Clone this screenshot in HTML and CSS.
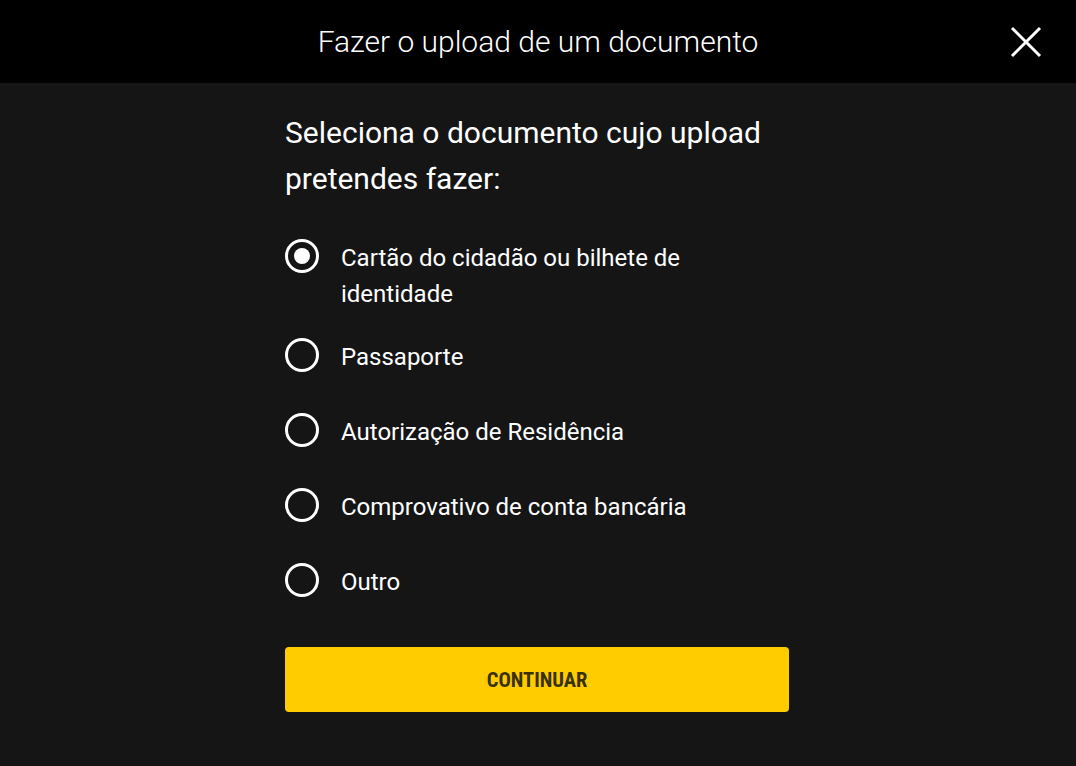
FILE: index.html
```html
<!DOCTYPE html>
<html>
<head>
    <title>Fazer o upload de um documento</title>
    <link rel="stylesheet" href="styles.css">
</head>
<body>

    <div class="topbar">
        <h1>Fazer o upload de um documento</h1>
        <button class="close" aria-label="Fechar">
            <svg width="32" height="32" viewBox="0 0 32 32">
                <path d="M2 2 L30 30 M30 2 L2 30" stroke="#fff" stroke-width="3" fill="none"/>
            </svg>
        </button>
    </div>

    <div class="content">
        <h2>Seleciona o documento cujo upload pretendes fazer:</h2>

        <div class="options">
            <label class="option option-long">
                <span class="radio checked"></span>
                <span class="label">Cartão do cidadão ou bilhete de identidade</span>
            </label>
            <label class="option">
                <span class="radio"></span>
                <span class="label">Passaporte</span>
            </label>
            <label class="option">
                <span class="radio"></span>
                <span class="label">Autorização de Residência</span>
            </label>
            <label class="option">
                <span class="radio"></span>
                <span class="label">Comprovativo de conta bancária</span>
            </label>
            <label class="option">
                <span class="radio"></span>
                <span class="label">Outro</span>
            </label>
        </div>

        <button class="continue">CONTINUAR</button>
    </div>

</body>
</html>
```

FILE: styles.css
```css
body {
    margin: 0;
    font-family: Roboto, 'Liberation Sans', sans-serif;
    background-color: #151515;
    color: #fff;
}

.topbar {
    position: relative;
    height: 83px;
    background-color: #000;
    display: flex;
    align-items: center;
    justify-content: center;
}

.topbar h1 {
    margin: 0;
    font-size: 30px;
    font-weight: 300;
    color: #fff;
}

.close {
    position: absolute;
    right: 34px;
    top: 26px;
    background: none;
    border: none;
    padding: 0;
    width: 32px;
    height: 32px;
    cursor: pointer;
}

.content {
    width: 504px;
    margin-left: calc(50% - 253px);
    padding-top: 27px;
}

.content h2 {
    margin: 0 0 38px 0;
    font-size: 30px;
    font-weight: 400;
    line-height: 46px;
}

.option {
    display: flex;
    align-items: flex-start;
    margin-bottom: 39px;
    cursor: pointer;
}

.option-long {
    margin-bottom: 27px;
}

.option:last-child {
    margin-bottom: 47px;
}

.radio {
    flex: none;
    box-sizing: border-box;
    width: 34px;
    height: 34px;
    margin-top: -1px;
    margin-right: 22px;
    border: 3px solid #fff;
    border-radius: 50%;
    display: flex;
    align-items: center;
    justify-content: center;
}

.radio.checked::after {
    content: '';
    width: 16px;
    height: 16px;
    border-radius: 50%;
    background-color: #fff;
}

.label {
    font-size: 24px;
    line-height: 36px;
    width: 370px;
}

.continue {
    display: block;
    width: 100%;
    height: 65px;
    background-color: #ffcc00;
    border: none;
    border-radius: 4px;
    color: #3a3100;
    font-family: Roboto, 'Liberation Sans', sans-serif;
    font-size: 20.5px;
    font-weight: 700;
    font-stretch: condensed;
    cursor: pointer;
}
```
